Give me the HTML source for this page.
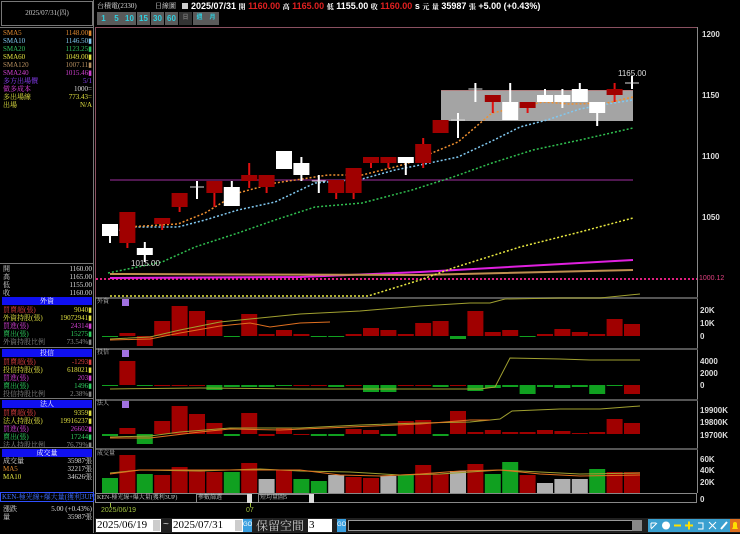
<!DOCTYPE html>
<html><head><meta charset="utf-8">
<style>
*{margin:0;padding:0;box-sizing:border-box}
body{width:740px;height:533px;background:#000;overflow:hidden;position:relative;font-family:"Liberation Sans","Noto Sans CJK TC",sans-serif;color:#ddd}
.a{position:absolute;white-space:nowrap}
.t{font-family:"Liberation Serif","Noto Serif CJK SC",serif;font-size:7px;line-height:8px}
.row{position:absolute;left:3px;width:89px;height:8px}
.row span{position:absolute;right:0}
.hd{position:absolute;left:2px;width:90px;height:8px;background:#1010f0;color:#fff;text-align:center;font-size:7px;line-height:8px;font-family:"Liberation Serif","Noto Serif CJK SC",serif}
.btn{position:absolute;top:12px;height:13px;width:13px;background:#5a5a5a;color:#30d0e0;font-size:8px;line-height:13px;text-align:center;font-weight:bold}
</style></head><body>
<!-- left panel -->
<div class="a" style="left:0;top:0;width:94px;height:533px;border-right:1px solid #777"></div>
<div class="a" style="left:1px;top:1px;width:92px;height:25px;border:1px solid #777"></div>
<div class="a t" style="left:0;top:9px;width:94px;text-align:center;color:#ccc">2025/07/31(四)</div>
<div class="a" style="left:0;top:27px;width:94px;border-top:1px solid #777"></div>
<div class="t">
<div class="row" style="top:29px;color:#e08a30">SMA5<span>1148.00▮</span></div>
<div class="row" style="top:37px;color:#80c8f0">SMA10<span>1146.50▮</span></div>
<div class="row" style="top:45px;color:#30c060">SMA20<span>1123.25▮</span></div>
<div class="row" style="top:53px;color:#e0e040">SMA60<span>1049.00▮</span></div>
<div class="row" style="top:61px;color:#b89060">SMA120<span>1007.11▮</span></div>
<div class="row" style="top:69px;color:#d040d0">SMA240<span>1015.46▮</span></div>
<div class="row" style="top:77px;color:#9040ff">多方出場價<span>5/1</span></div>
<div class="row" style="top:85px;color:#e040e0">做多成本<span style="color:#ddd">1000=</span></div>
<div class="row" style="top:93px;color:#e0e040">多出場線<span>773.43=</span></div>
<div class="row" style="top:101px;color:#e0e040">出場<span>N/A</span></div>
</div>
<div class="a" style="left:0;top:263px;width:94px;border-top:1px solid #777"></div>
<div class="t" style="color:#ddd">
<div class="row" style="top:265px">開<span>1160.00</span></div>
<div class="row" style="top:273px">高<span>1165.00</span></div>
<div class="row" style="top:281px">低<span>1155.00</span></div>
<div class="row" style="top:289px">收<span>1160.00</span></div>
</div>
<div class="hd" style="top:297px">外資</div>
<div class="t">
<div class="row" style="top:306px;color:#e04040">買賣超(張)<span style="color:#e0e040">9040▮</span></div>
<div class="row" style="top:314px;color:#e0e040">外資持股(張)<span>19072941▮</span></div>
<div class="row" style="top:322px;color:#d040d0">買進(張)<span>24314▮</span></div>
<div class="row" style="top:330px;color:#30d060">賣出(張)<span>15275▮</span></div>
<div class="row" style="top:338px;color:#888">外資持股比例<span>73.54%▮</span></div>
</div>
<div class="a" style="left:0;top:347px;width:94px;border-top:1px solid #777"></div>
<div class="hd" style="top:349px">投信</div>
<div class="t">
<div class="row" style="top:358px;color:#e04040">買賣超(張)<span>-1293▮</span></div>
<div class="row" style="top:366px;color:#e0e040">投信持股(張)<span>618021▮</span></div>
<div class="row" style="top:374px;color:#d040d0">買進(張)<span>203▮</span></div>
<div class="row" style="top:382px;color:#30d060">賣出(張)<span>1496▮</span></div>
<div class="row" style="top:390px;color:#888">投信持股比例<span>2.38%▮</span></div>
</div>
<div class="a" style="left:0;top:398px;width:94px;border-top:1px solid #777"></div>
<div class="hd" style="top:400px">法人</div>
<div class="t">
<div class="row" style="top:409px;color:#e04040">買賣超(張)<span style="color:#e0e040">9359▮</span></div>
<div class="row" style="top:417px;color:#e0e040">法人持股(張)<span>19916237▮</span></div>
<div class="row" style="top:425px;color:#d040d0">買進(張)<span>26602▮</span></div>
<div class="row" style="top:433px;color:#30d060">賣出(張)<span>17244▮</span></div>
<div class="row" style="top:441px;color:#888">法人持股比例<span>76.79%▮</span></div>
</div>
<div class="a" style="left:0;top:447px;width:94px;border-top:1px solid #777"></div>
<div class="hd" style="top:449px">成交量</div>
<div class="t">
<div class="row" style="top:457px;color:#ddd">成交量<span>35987張</span></div>
<div class="row" style="top:465px;color:#e08a30">MA5<span style="color:#ddd">32217張</span></div>
<div class="row" style="top:473px;color:#e0e040">MA10<span style="color:#ddd">34626張</span></div>
</div>
<div class="a" style="left:0;top:492px;width:94px;height:10px;border:1px solid #3050ff"></div>
<div class="a t" style="left:2px;top:493px;color:#4070ff">KEN-極光線+爆大量(獲利3UP)</div>
<div class="t">
<div class="row" style="top:505px;color:#ddd">漲跌<span>5.00 (+0.43%)</span></div>
<div class="row" style="top:513px;color:#ddd">量<span>35987張</span></div>
</div>

<!-- header -->
<div class="a t" style="left:97px;top:2px;color:#ddd">台積電(2330)</div>
<div class="a t" style="left:155px;top:2px;color:#ddd">日線圖</div>
<div class="a" style="left:182px;top:3px;width:6px;height:6px;background:#ccc"></div>
<div class="a" style="left:191px;top:0px;font-size:9px;font-weight:bold;color:#fff;line-height:12px">2025/07/31 <span class="t">開</span> <span style="color:#e02020">1160.00</span> <span class="t">高</span> <span style="color:#e02020">1165.00</span> <span class="t">低</span> 1155.00 <span class="t">收</span> <span style="color:#e02020">1160.00</span> s <span class="t">元</span> <span class="t">量</span> 35987 <span class="t">張</span> +5.00 (+0.43%)</div>
<div class="btn" style="left:97px">1</div>
<div class="btn" style="left:110px">5</div>
<div class="btn" style="left:123px">10</div>
<div class="btn" style="left:137px">15</div>
<div class="btn" style="left:151px">30</div>
<div class="btn" style="left:165px">60</div>
<div class="btn" style="left:179px;background:#333;color:#777;font-size:6px">日</div>
<div class="btn" style="left:193px;font-size:6px">週</div>
<div class="btn" style="left:206px;font-size:6px">月</div>

<svg class="a" style="left:0;top:0" width="740" height="533" id="s"></svg>

<!-- axis labels -->
<div style="font-size:8px;color:#ddd;font-weight:bold">
<div class="a" style="left:702px;top:30px">1200</div>
<div class="a" style="left:702px;top:91px">1150</div>
<div class="a" style="left:702px;top:152px">1100</div>
<div class="a" style="left:702px;top:213px">1050</div>
<div class="a" style="left:699px;top:275px;color:#e04080;font-weight:normal;font-size:7px">1000.12</div>
<div class="a" style="left:618px;top:69px;font-weight:normal">1165.00</div>
<div class="a" style="left:131px;top:259px;font-weight:normal">1015.00</div>
<div class="a" style="left:700px;top:306px">20K</div>
<div class="a" style="left:700px;top:319px">10K</div>
<div class="a" style="left:700px;top:332px">0</div>
<div class="a" style="left:700px;top:357px">4000</div>
<div class="a" style="left:700px;top:369px">2000</div>
<div class="a" style="left:700px;top:381px">0</div>
<div class="a" style="left:700px;top:406px">19900K</div>
<div class="a" style="left:700px;top:418px">19800K</div>
<div class="a" style="left:700px;top:431px">19700K</div>
<div class="a" style="left:700px;top:455px">60K</div>
<div class="a" style="left:700px;top:466px">40K</div>
<div class="a" style="left:700px;top:478px">20K</div>
<div class="a" style="left:700px;top:495px">0</div>
</div>
<div class="a t" style="left:97px;top:298px;color:#ccc;font-size:6px">外資</div>
<div class="a t" style="left:97px;top:349px;color:#ccc;font-size:6px">投信</div>
<div class="a t" style="left:97px;top:400px;color:#ccc;font-size:6px">法人</div>
<div class="a t" style="left:97px;top:450px;color:#ccc;font-size:6px">成交量</div>
<div class="a" style="left:122px;top:299px;width:7px;height:7px;background:#a070e0"></div>
<div class="a" style="left:122px;top:350px;width:7px;height:7px;background:#a070e0"></div>
<div class="a" style="left:122px;top:401px;width:7px;height:7px;background:#a070e0"></div>

<!-- bottom rows -->
<div class="a" style="left:95px;top:493px;width:602px;height:10px;border:1px solid #888"></div>
<div class="a t" style="left:97px;top:494px;color:#ccc;font-size:6px">KEN-極光線+爆大量(獲利3UP)</div>
<div class="a" style="left:196px;top:494px;width:56px;height:9px;border:1px solid #888"></div>
<div class="a t" style="left:198px;top:494px;color:#ccc;font-size:6px">參數篩選</div>
<div class="a" style="left:247px;top:494px;width:5px;height:9px;background:#ddd"></div>
<div class="a" style="left:258px;top:494px;width:56px;height:9px;border:1px solid #888"></div>
<div class="a t" style="left:260px;top:494px;color:#ccc;font-size:6px">短均量圖5</div>
<div class="a" style="left:309px;top:494px;width:5px;height:9px;background:#ddd"></div>
<div class="a" style="left:110px;top:503px;width:1px;height:4px;background:#a0c040"></div>
<div class="a" style="left:250px;top:503px;width:1px;height:4px;background:#a0c040"></div>
<div class="a" style="left:101px;top:507px;font-size:7px;color:#a0c040">2025/06/19</div>
<div class="a" style="left:246px;top:507px;font-size:7px;color:#a0c040">07</div>

<div class="a" style="left:95px;top:518px;width:645px;height:15px;background:#202020"></div>
<div class="a" style="left:96px;top:519px;width:65px;height:13px;background:#fff;color:#000;font-family:'Liberation Serif',serif;font-size:11px;line-height:13px;padding-left:1px">2025/06/19</div>
<div class="a" style="left:153px;top:520px;width:7px;height:11px;background:#ccc"></div>
<div class="a" style="left:163px;top:519px;color:#ddd;font-size:10px">~</div>
<div class="a" style="left:172px;top:519px;width:71px;height:13px;background:#fff;color:#000;font-family:'Liberation Serif',serif;font-size:11px;line-height:13px;padding-left:1px">2025/07/31</div>
<div class="a" style="left:235px;top:520px;width:7px;height:11px;background:#ccc"></div>
<div class="a" style="left:243px;top:519px;width:9px;height:13px;background:#3aa0e0;color:#fff;font-size:6px;line-height:13px">GO</div>
<div class="a" style="left:256px;top:517px;color:#ccc;font-size:12px;font-family:'Noto Serif CJK SC',serif">保留空間</div>
<div class="a" style="left:308px;top:519px;width:24px;height:13px;background:#fff;color:#000;font-family:'Liberation Serif',serif;font-size:11px;line-height:13px;padding-left:1px">3</div>
<div class="a" style="left:337px;top:519px;width:9px;height:13px;background:#3aa0e0;color:#fff;font-size:6px;line-height:13px">GO</div>
<div class="a" style="left:348px;top:520px;width:292px;height:11px;background:#000;border:1px solid #999"></div>
<div class="a" style="left:632px;top:520px;width:10px;height:11px;background:#888"></div>
<div class="a" style="left:648px;top:519px;width:82px;height:13px;background:#3aa0d0"></div>
<div class="a" style="left:730px;top:519px;width:10px;height:13px;background:#e07020"></div>
<svg class="a" style="left:648px;top:519px" width="92" height="13">
<path d="M3 10L9 4M3 4h5M3 4v5" stroke="#fff" fill="none"/>
<circle cx="18" cy="6.5" r="4" fill="#fff"/>
<rect x="26" y="5.5" width="7" height="2" fill="#ffe000"/>
<rect x="37" y="5.5" width="8" height="2" fill="#ffe000"/><rect x="40" y="2.5" width="2" height="8" fill="#ffe000"/>
<path d="M50 4h5v6h-5" stroke="#fff" fill="none"/>
<path d="M61 3l7 7M68 3l-7 7" stroke="#fff"/>
<path d="M73 10l6-7" stroke="#fff" stroke-width="2"/>
<path d="M84 10h6l-1-2v-3a2 2 0 0 0-4 0v3z" fill="#ffe000"/>
</svg>

<script>
const s=document.getElementById('s');let h='';
const L=(x1,y1,x2,y2,c,w,d)=>h+=`<line x1="${x1}" y1="${y1}" x2="${x2}" y2="${y2}" stroke="${c}" stroke-width="${w||1}" ${d?'stroke-dasharray="'+d+'"':''}/>`;
const R=(x,y,w,hh,c)=>h+=`<rect x="${x}" y="${y}" width="${w}" height="${hh}" fill="${c}"/>`;
const P=(pts,c,w,d)=>h+=`<polyline points="${pts.map(p=>p.join(',')).join(' ')}" fill="none" stroke="${c}" stroke-width="${w||1}" ${d?'stroke-dasharray="'+d+'"':''}/>`;
// frames
h+=`<rect x="95.5" y="27.5" width="602" height="270" fill="none" stroke="#8a5060"/>`;
L(697.5,27,697.5,493,'#888');
[297,348,399,448].forEach(y=>{R(95,y,603,2,'#555');});
L(95.5,297,95.5,493,'#888');
// gray box
R(441,90,192,31,'#a4a4a4');L(441,90.5,633,90.5,'#b08080');
// reference lines
L(110,180,633,180,'#a030a0');
L(96,279,697,279,'#e02080',2,'2 2');
// MAs
P([[110,278],[300,277],[420,272],[633,260]],'#e020e0',2);
P([[110,274],[420,275],[633,270]],'#c09050',2);
P([[110,296],[368,296],[420,280],[453,268],[520,247],[580,232],[633,218]],'#e8e840',1.5,'2 2');
P([[108,273],[162,262],[195,247],[238,233],[275,220],[315,207],[362,203],[412,190],[453,177],[492,163],[533,150],[580,140],[633,128]],'#30c050',1.5,'2 2');
P([[108,235],[128,227],[178,227],[205,220],[238,210],[275,202],[315,183],[362,179],[395,170],[420,165],[458,157],[492,141],[520,127],[547,120],[580,109],[607,104],[633,100]],'#80c8f0',1.5,'2 2');
P([[108,233],[127,227],[178,224],[205,213],[238,193],[275,183],[302,179],[328,175],[362,175],[395,167],[415,161],[432,153],[458,142],[492,113],[520,107],[543,102],[570,104],[607,103],[633,97]],'#f09030',1.5,'2 2');
// candles [i,type,bt,bb,wt,wb]
const C=[[0,'w',224,236,224,243],[1,'r',212,243,212,248],[2,'w',248,255,242,262],[3,'r',218,224,218,230],[4,'r',193,207,193,212],[5,'d',187,187,181,199],[6,'r',181,193,181,207],[7,'w',187,206,181,206],[8,'r',175,181,163,188],[9,'r',175,187,175,193],[10,'w',151,169,151,169],[11,'w',163,175,157,181],[12,'d',181,181,175,193],[13,'r',180,193,180,199],[14,'r',168,193,168,199],[15,'r',157,163,157,168],[16,'r',157,163,157,168],[17,'w',157,163,157,175],[18,'r',144,163,138,168],[19,'r',120,133,120,133],[20,'d',120,120,113,138],[21,'d',89,89,83,102],[22,'r',95,102,95,113],[23,'w',102,120,83,120],[24,'r',102,108,102,113],[25,'w',95,102,89,102],[26,'w',95,102,89,108],[27,'w',89,102,83,102],[28,'w',102,113,102,126],[29,'r',89,95,83,102],[30,'d',83,83,76,89]];
C.forEach(([i,t,bt,bb,wt,wb])=>{const x=102+17.4*i,cx=x+8;
 const col=t=='r'?'#e01010':'#fff';L(cx,wt,cx,wb,col,2);
 if(t=='d'){L(x+1,bt,x+15,bt,'#ddd',1)}else{R(x,bt,16,Math.max(bb-bt,2),t=='r'?'#a00000':'#fff');}});
// subpanels
const bar=(base,tops,cols)=>tops.forEach((t,i)=>{const x=102+17.4*i;const c=cols[i];
 const col=c=='g'?'#10a020':c=='w'?'#b0b0b0':'#a00000';
 if(t<base)R(x,t,16,base-t,col);else R(x,base,16,Math.max(t-base,1),col);});
// 外資
bar(336,[337,333,346,321,306,311,320,337,314,334,330,334,337,337,334,328,330,334,323,321,339,311,332,330,337,334,329,332,334,319,324],
'grrrrrrgrrrrggrrrrrrgrrrgrrrrrr');
P([[110,339],[150,337],[180,330],[220,322],[260,318],[300,314],[360,311],[420,306],[470,303],[490,303],[505,299],[560,298],[600,298],[640,294]],'#a0a030');
P([[110,340],[150,339],[180,333],[220,326],[250,323],[270,327],[300,323],[330,322]],'#e07020');
// 投信
bar(385,[386,361,386,385,385,385,390,387,387,387,385,385,385,387,385,392,392,385,385,387,385,391,388,387,394,387,388,387,394,386,394],
'grgrrrgggggrrgrggrrgrggggggggg');
P([[110,389],[200,388],[300,389],[400,389],[460,389],[480,389],[495,387],[510,358],[560,359],[590,360],[640,360]],'#a0a030');
// 法人
bar(434,[436,428,444,421,406,414,423,436,413,436,428,434,436,436,429,430,436,421,420,436,411,432,430,432,432,430,431,433,432,419,423],
'grgrrrrgrrrrggrrgrrgrrrrrrrrrrr');
P([[110,437],[150,436],[180,432],[230,428],[300,428],[360,425],[420,423],[470,422],[500,419],[512,411],[560,409],[600,409],[640,406]],'#a0a030');
P([[110,438],[150,438],[200,432],[230,429],[280,430],[420,424],[470,420],[490,420]],'#e07020');
// volume
const vt=[478,455,474,475,467,470,472,472,463,479,470,479,481,475,477,478,476,475,465,474,471,464,474,462,475,483,479,479,469,472,472];
bar(493,vt,'grgrrrrgrwrggwrrwgrrwrggrwwwgrr');
P([[110,473],[140,470],[200,471],[260,469],[300,471],[350,472],[400,475],[440,474],[500,470],[540,472],[580,474],[640,473]],'#a0a030');
P([[110,474],[140,470],[200,470],[260,470],[300,470],[340,475],[380,476],[420,474],[460,471],[500,470],[540,474],[580,476],[640,475]],'#e07020');
s.innerHTML=h;
</script>
</body></html>
